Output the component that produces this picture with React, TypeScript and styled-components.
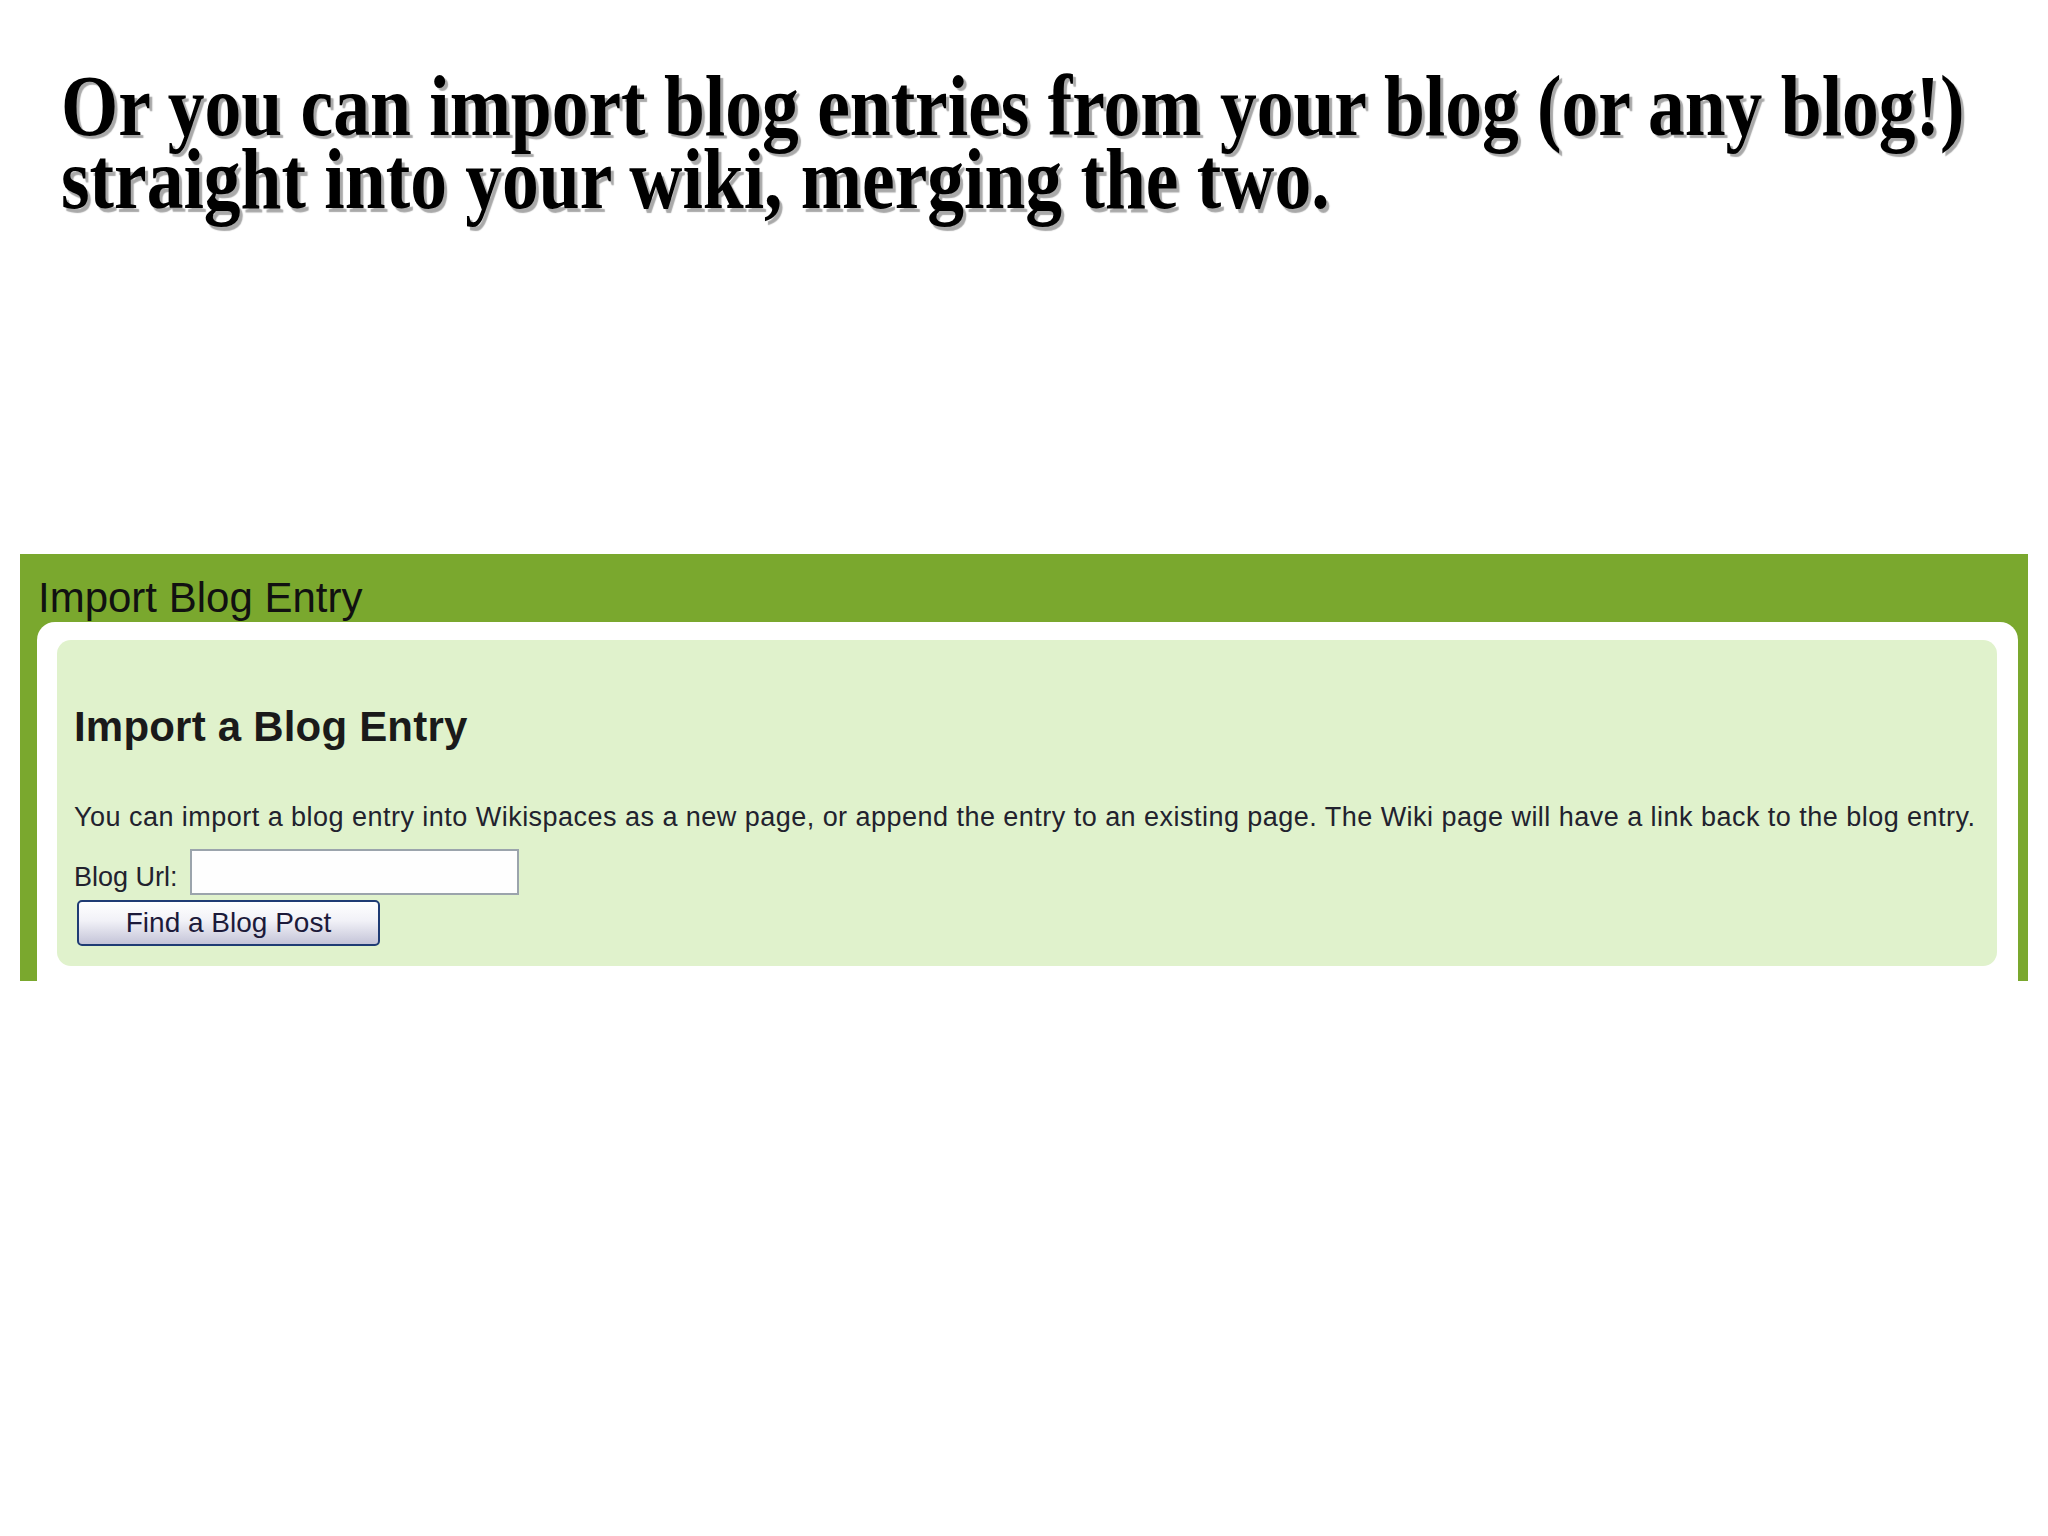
import * as React from "react";
import styled, { createGlobalStyle } from "styled-components";

const GlobalStyle = createGlobalStyle`
  html, body {
    margin: 0;
    padding: 0;
    background: #ffffff;
  }
  body {
    width: 2048px;
    min-height: 1536px;
    font-family: "Liberation Sans", Arial, sans-serif;
  }
`;

const Page = styled.div`
  display: flex;
  flex-direction: column;
  width: 2048px;
  min-height: 1536px;
`;

const Slide = styled.div`
  padding: 69px 0 0 61px;
  height: 148px;
`;

// condensed bold serif: shrink the font and stretch it back vertically
const SlideTitle = styled.h1`
  display: inline-block;
  margin: 0;
  font-family: "Liberation Serif", "Times New Roman", serif;
  font-weight: 700;
  font-size: 73.5px;
  line-height: 63.25px;
  color: #000;
  white-space: nowrap;
  text-shadow: 3px 3px 1px #a9a9a9;
  transform: scaleY(1.17);
  transform-origin: 0 0;
`;

const Frame = styled.section`
  margin: 337px 20px 0 20px;
  background: #7aa82e;
  display: flex;
  flex-direction: column;
`;

const FrameTitle = styled.div`
  padding: 23px 0 0 18px;
  height: 42px;
  font-size: 42px;
  line-height: 42px;
  color: #111;
  white-space: nowrap;
`;

const FrameBody = styled.div`
  margin: 3px 10px 0 17px;
  background: #fff;
  border-radius: 18px 18px 0 0;
  padding: 18px 21px 15px 20px;
`;

const Card = styled.div`
  background: #e0f2cc;
  border-radius: 14px;
  padding: 66px 17px 20px 17px;
`;

const CardHeading = styled.h2`
  margin: 0;
  font-size: 42px;
  line-height: 42px;
  font-weight: 700;
  color: #1a1a1a;
  letter-spacing: 0.2px;
`;

const Intro = styled.p`
  margin: 53px 0 0 0;
  font-size: 27px;
  line-height: 32px;
  color: #22222e;
  white-space: nowrap;
  letter-spacing: 0.47px;
`;

const FieldRow = styled.div`
  display: flex;
  align-items: flex-end;
  gap: 12px;
  margin-top: 16px;
`;

const FieldLabel = styled.label`
  font-size: 27px;
  line-height: 32px;
  margin-bottom: 2px;
  color: #22222e;
`;

const UrlInput = styled.input`
  box-sizing: border-box;
  width: 329px;
  height: 46px;
  border: 2px solid #9ba4ac;
  background: #fefefe;
  padding: 0 6px;
  font-size: 24px;
  font-family: inherit;
  outline: none;
`;

const FindButton = styled.button`
  box-sizing: border-box;
  display: block;
  margin: 5px 0 0 3px;
  width: 303px;
  height: 46px;
  border: 2px solid #1f3c74;
  border-radius: 5px;
  background: linear-gradient(to bottom, #ffffff 0%, #f1f1f7 45%, #c4c4d8 100%);
  font-family: "Liberation Sans", Arial, sans-serif;
  font-size: 28px;
  line-height: 40px;
  color: #1c1a3a;
  padding: 0;
  cursor: pointer;
`;

export default function App() {
  return (
    <Page>
      <GlobalStyle />
      <Slide>
        <SlideTitle>
          Or you can import blog entries from your blog (or any blog!)
          <br />
          straight into your wiki, merging the two.
        </SlideTitle>
      </Slide>

      {/* Wikispaces import panel */}
      <Frame>
        <FrameTitle>Import Blog Entry</FrameTitle>
        <FrameBody>
          <Card>
            <CardHeading>Import a Blog Entry</CardHeading>
            <Intro>
              You can import a blog entry into Wikispaces as a new page, or append the entry to an
              existing page. The Wiki page will have a link back to the blog entry.
            </Intro>
            <FieldRow>
              <FieldLabel htmlFor="blogUrl">Blog Url:</FieldLabel>
              <UrlInput id="blogUrl" type="text" />
            </FieldRow>
            <FindButton type="button">Find a Blog Post</FindButton>
          </Card>
        </FrameBody>
      </Frame>
    </Page>
  );
}
